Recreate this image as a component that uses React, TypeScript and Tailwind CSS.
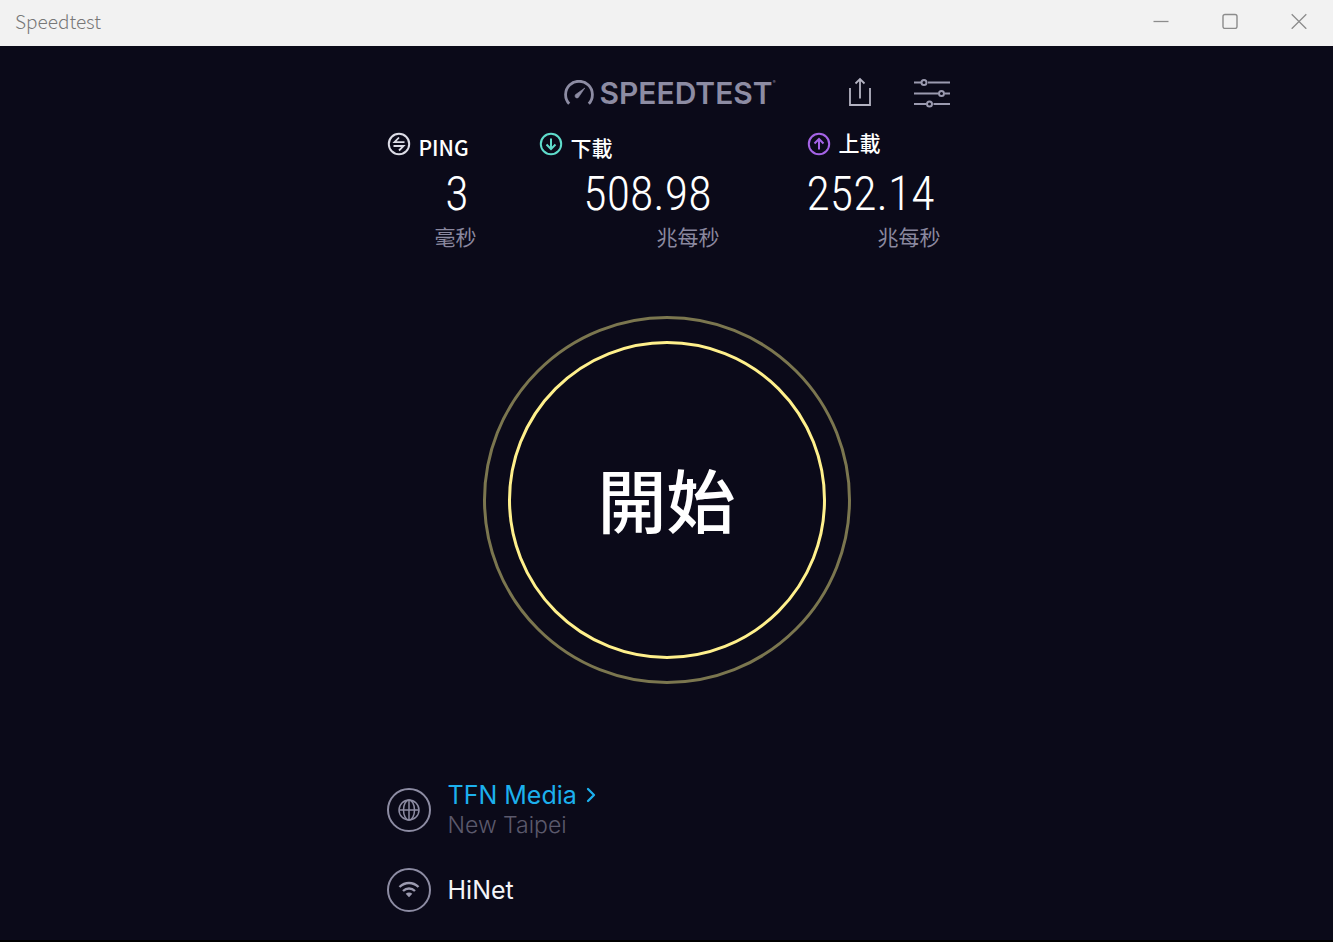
import type { ReactNode } from "react";
import { ChevronRight } from "lucide-react";

interface StatProps {
    icon: ReactNode;
    label: string;
    value: string;
    unit: string;
    className: string;
    labelClassName: string;
}

function Stat({ icon, label, value, unit, className, labelClassName }: StatProps) {
    return (
        <div className={className}>
            <dt className="flex h-8 items-start gap-2">
                {icon}
                <span className={labelClassName}>{label}</span>
            </dt>
            <dd className="text-right">
                <p className="pr-2 font-['Roboto_Condensed','Roboto',sans-serif] text-[48px] font-light leading-[60px] text-white">{value}</p>
                <p className="text-[21px] leading-6 text-[#8a889f]">{unit}</p>
            </dd>
        </div>
    );
}

function PingIcon() {
    return (
        <svg viewBox="0 0 24 24" className="size-6 shrink-0 text-[#dcdce6]" fill="none" stroke="currentColor" strokeWidth="2" aria-hidden="true">
            <circle cx="12" cy="12" r="10.2" />
            <path d="M12 5.500L7.500 10.200h10M6.500 14H16.500L12 18.500" strokeWidth="1.800" />
        </svg>
    );
}

function ArrowCircle({ up, className }: { up?: boolean; className: string }) {
    return (
        <svg viewBox="0 0 24 24" className={className} fill="none" stroke="currentColor" strokeWidth="2" aria-hidden="true">
            <circle cx="12" cy="12" r="10.2" />
            <path d={up ? "M12 17.5V7.5M7.5 11.5L12 7l4.5 4.5" : "M12 6.5v10M7.5 12.5L12 17l4.5-4.5"} />
        </svg>
    );
}

function TitleBar() {
    return (
        <header className="flex h-[46px] shrink-0 items-center justify-between bg-[#f2f2f2] pl-[15px] text-[#8c8c8c]">
            <h1 className="pb-1 text-[19px] font-light leading-6 text-[#777777]">Speedtest</h1>
            <div className="flex h-full pb-1">
                <button type="button" aria-label="Minimize" className="flex w-[69px] items-center justify-center">
                    <svg viewBox="0 0 16 16" className="size-4" fill="none" stroke="currentColor">
                        <path d="M0.5 8.5h15" strokeWidth="1.3" />
                    </svg>
                </button>
                <button type="button" aria-label="Maximize" className="flex w-[69px] items-center justify-center">
                    <svg viewBox="0 0 16 16" className="size-4" fill="none" stroke="currentColor">
                        <rect x="1" y="1.5" width="14" height="14" rx="2" strokeWidth="1.4" />
                    </svg>
                </button>
                <button type="button" aria-label="Close" className="flex w-[69px] items-center justify-center">
                    <svg viewBox="0 0 16 16" className="size-4" fill="none" stroke="currentColor">
                        <path d="M0.7 1.2l14.6 14.6M15.3 1.2L0.7 15.8" strokeWidth="1.3" />
                    </svg>
                </button>
            </div>
        </header>
    );
}

function Toolbar() {
    return (
        <div className="flex h-8 items-center justify-end">
            <div className="flex items-center gap-1 text-[#8d8ca3]">
                <svg viewBox="0 0 32 26" className="h-[26px] w-8" fill="none" stroke="currentColor" aria-hidden="true">
                    <path d="M6.2 23.8A13.4 13.4 0 1 1 25.8 23.8" strokeWidth="2.8" />
                    <path d="M21.8 8L12.6 14.6a1.9 1.9 0 0 0 2.8 2.8z" fill="currentColor" stroke="currentColor" strokeWidth="0.6" />
                </svg>
                <span className="font-['Inter',sans-serif] text-[30px] font-semibold leading-8">SPEEDTEST</span>
                <span className="-ml-1 self-start text-[6px] leading-3">®</span>
            </div>
            <button type="button" aria-label="Share" className="ml-[72px] text-[#b4b3c2]">
                <svg viewBox="0 0 24 32" className="h-8 w-6" fill="none" stroke="currentColor" strokeWidth="1.8">
                    <path d="M2 11v17h20V11M12 21.5V2.2M7.5 6.5L12 2l4.5 4.5" />
                </svg>
            </button>
            <button type="button" aria-label="Settings" className="ml-[41px] text-[#9b9aaf]">
                <svg viewBox="0 0 38 30" className="h-[30px] w-[38px]" fill="none" stroke="currentColor" strokeWidth="2">
                    <path d="M1 4.5h7M15 4.5h22M1 15.5h24.5M32 15.5h5M1 26h12.5M20.5 26H37" />
                    <circle cx="11" cy="4.5" r="2.5" />
                    <circle cx="28.5" cy="15.5" r="2.5" />
                    <circle cx="16.5" cy="26" r="2.5" />
                </svg>
            </button>
        </div>
    );
}

function Connection() {
    return (
        <section className="flex flex-col gap-[27px] pl-1 font-['Inter',sans-serif]">
            <div className="flex items-center gap-[17px]">
                <span className="flex size-11 shrink-0 items-center justify-center rounded-full border-2 border-[#8d8ca3] text-[#8d8ca3]">
                    <svg viewBox="0 0 24 24" className="size-6" fill="none" stroke="currentColor" strokeWidth="1.5" aria-hidden="true">
                        <circle cx="12" cy="12" r="10" />
                        <ellipse cx="12" cy="12" rx="5.5" ry="10" />
                        <path d="M12 2v20M2 12h20" />
                    </svg>
                </span>
                <div className="pb-0.5">
                    <a href="#servers" className="flex items-center gap-0.5 text-[25px] leading-8 text-[#1cb0ee]">
                        TFN Media
                        <ChevronRight className="size-6" strokeWidth={2.3} aria-hidden="true" />
                    </a>
                    <p className="text-[23px] font-light leading-7 text-[#5b596c]">New Taipei</p>
                </div>
            </div>
            <div className="flex items-center gap-[17px]">
                <span className="flex size-11 shrink-0 items-center justify-center rounded-full border-2 border-[#8d8ca3] text-[#9b9aaf]">
                    <svg viewBox="0 0 24 24" className="size-6" fill="none" stroke="currentColor" strokeWidth="2.4" aria-hidden="true">
                        <path d="M2.5 9C8 3.7 16 3.7 21.5 9M6 13c3.5-3.3 8.5-3.3 12 0" />
                        <path d="M8.7 15.8c2-1.6 4.6-1.6 6.6 0L12 19.2z" fill="currentColor" stroke="none" />
                    </svg>
                </span>
                <p className="text-[25px] leading-8 text-[#f4f4f8]">HiNet</p>
            </div>
        </section>
    );
}

export default function App() {
    return (
        <div className="flex min-h-screen flex-col border-b-2 border-black bg-[#0b0a19] font-['Noto_Sans_CJK_TC',sans-serif]">
            <TitleBar />
            <main className="mx-auto flex w-full max-w-[568px] grow flex-col pb-7 pt-[31px]">
                <Toolbar />
                <dl className="mt-[23px] flex pl-1">
                    <Stat
                        icon={<PingIcon />}
                        label="PING"
                        value="3"
                        unit="毫秒"
                        className="w-[90px]"
                        labelClassName="text-[21px] font-medium leading-[30px] text-white"
                    />
                    <Stat
                        icon={<ArrowCircle className="size-6 shrink-0 text-[#5fdccb]" />}
                        label="下載"
                        value="508.98"
                        unit="兆每秒"
                        className="ml-[62px] w-[181px]"
                        labelClassName="text-[21px] font-medium leading-[30px] text-white"
                    />
                    <Stat
                        icon={<ArrowCircle up className="size-6 shrink-0 text-[#a563e6]" />}
                        label="上載"
                        value="252.14"
                        unit="兆每秒"
                        className="ml-[87px] w-[134px]"
                        labelClassName="text-[21px] font-medium leading-5 text-white"
                    />
                </dl>
                <button type="button" className="mt-[68px] size-[368px] self-center rounded-full border-[3px] border-[#7b764f] p-[22px]">
                    <span className="flex size-full items-center justify-center rounded-full border-[3px] border-[#fff08c] pb-1 text-[69px] font-medium leading-none text-white">
                        開始
                    </span>
                </button>
                <div className="mt-auto">
                    <Connection />
                </div>
            </main>
        </div>
    );
}
